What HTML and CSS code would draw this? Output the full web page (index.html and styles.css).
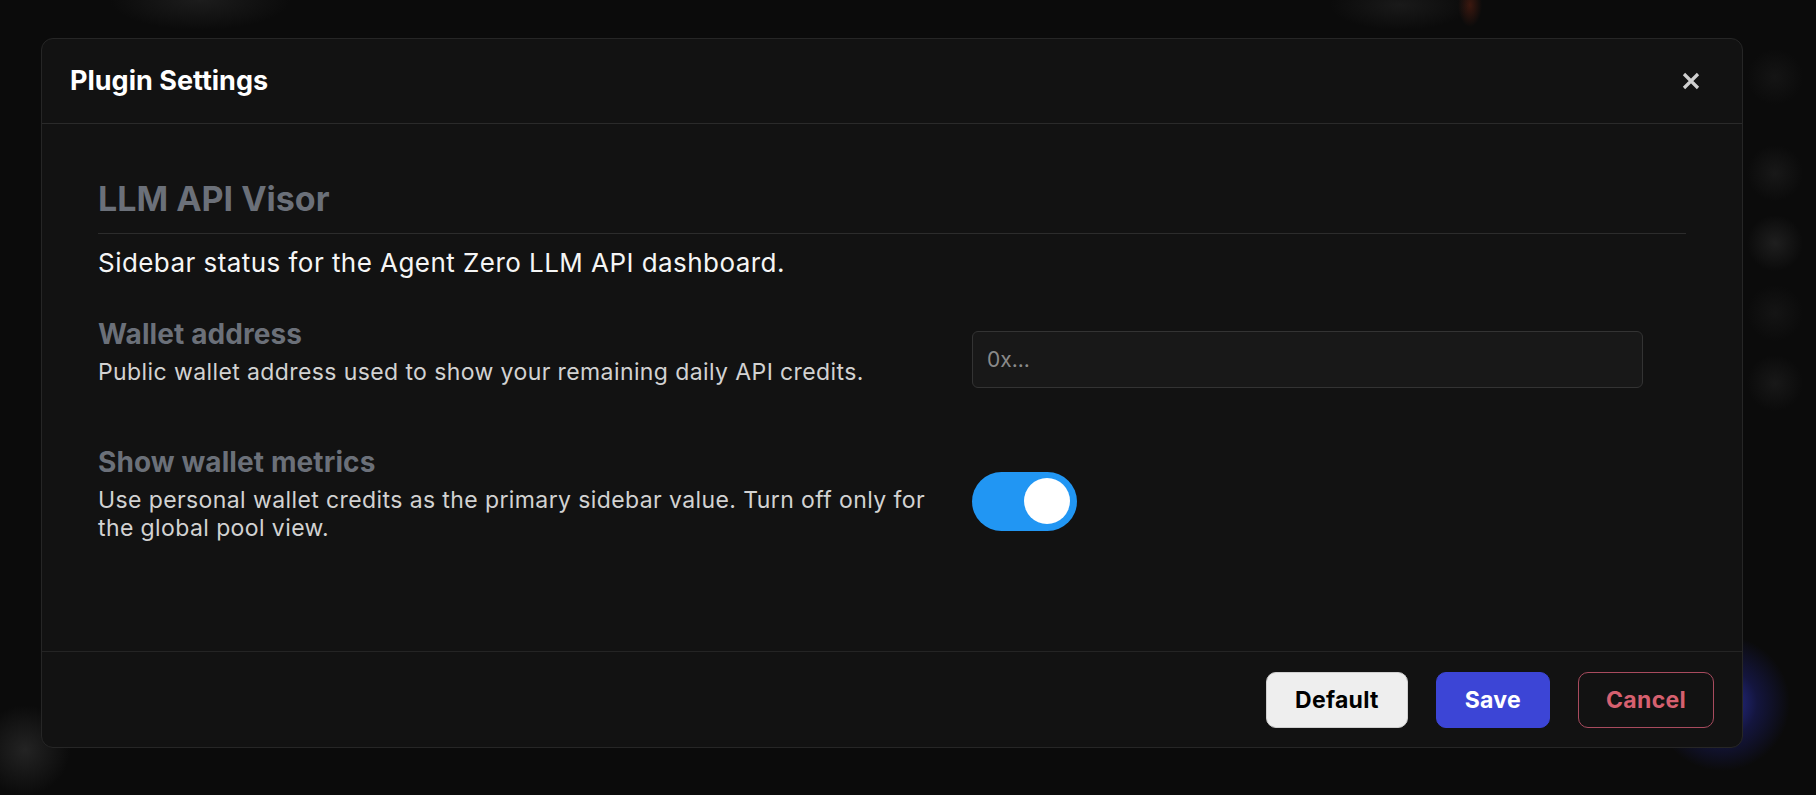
FILE: index.html
```
<!doctype html>
<html lang="en">
<head>
<meta charset="UTF-8">
<meta name="viewport" content="width=device-width, initial-scale=1">
<title>Plugin Settings</title>
<link rel="stylesheet" href="styles.css">
</head>
<body>
<div class="backdrop">
    <div class="modal">
        <div class="modal-header">
            <h1 class="modal-title">Plugin Settings</h1>
            <button class="close-btn" aria-label="Close">
                <svg width="18" height="18" viewBox="0 0 18 18">
                    <path d="M2 2 L16 16 M16 2 L2 16" stroke="#cfcfcf" stroke-width="3.2" fill="none"/>
                </svg>
            </button>
        </div>

        <div class="modal-body">
            <h2 class="section-title">LLM API Visor</h2>
            <p class="section-desc">Sidebar status for the Agent Zero LLM API dashboard.</p>

            <div class="field">
                <div class="field-text">
                    <div class="field-label">Wallet address</div>
                    <div class="field-desc">Public wallet address used to show your remaining daily API credits.</div>
                </div>
                <div class="field-control">
                    <input class="text-input" type="text" placeholder="0x...">
                </div>
            </div>

            <div class="field">
                <div class="field-text">
                    <div class="field-label">Show wallet metrics</div>
                    <div class="field-desc">Use personal wallet credits as the primary sidebar value. Turn off only for the global pool view.</div>
                </div>
                <div class="field-control">
                    <label class="toggle">
                        <input type="checkbox" checked>
                        <span class="slider"></span>
                    </label>
                </div>
            </div>
        </div>

        <div class="modal-footer">
            <button class="btn btn-default">Default</button>
            <button class="btn btn-save">Save</button>
            <button class="btn btn-cancel">Cancel</button>
        </div>
    </div>
</div>
</body>
</html>
```

FILE: styles.css
```
html, body {
    margin: 0;
    padding: 0;
    height: 100%;
}

body {
    background-color: #0b0b0b;
    background-image:
        radial-gradient(circle at 1722px 703px, rgba(60, 70, 240, 0.65) 0, rgba(40, 45, 180, 0.3) 35px, rgba(11, 11, 11, 0) 68px),
        radial-gradient(circle at 25px 750px, rgba(55, 55, 55, 0.55) 0, rgba(11, 11, 11, 0) 45px),
        radial-gradient(circle at 1775px 243px, rgba(50, 50, 50, 0.5) 0, rgba(11, 11, 11, 0) 28px),
        radial-gradient(circle at 1775px 173px, rgba(40, 40, 40, 0.45) 0, rgba(11, 11, 11, 0) 28px),
        radial-gradient(circle at 1775px 383px, rgba(40, 40, 40, 0.45) 0, rgba(11, 11, 11, 0) 28px),
        radial-gradient(circle at 1775px 313px, rgba(32, 32, 32, 0.45) 0, rgba(11, 11, 11, 0) 28px),
        radial-gradient(circle at 1775px 77px, rgba(32, 32, 32, 0.45) 0, rgba(11, 11, 11, 0) 28px),
        radial-gradient(ellipse 90px 30px at 200px 0px, rgba(40, 40, 40, 0.6) 0, rgba(11, 11, 11, 0) 100%),
        radial-gradient(ellipse 70px 25px at 1400px 5px, rgba(40, 40, 40, 0.5) 0, rgba(11, 11, 11, 0) 100%),
        radial-gradient(ellipse 12px 22px at 1470px 5px, rgba(120, 40, 20, 0.45) 0, rgba(11, 11, 11, 0) 100%);
    background-repeat: no-repeat;
    font-family: Inter, "Noto Sans", sans-serif;
    color: #f2f2f2;
    overflow: hidden;
}

.backdrop {
    padding: 38px 0 0 41px;
}

.modal {
    width: 1702px;
    height: 710px;
    box-sizing: border-box;
    background: #121212;
    border: 1px solid #262626;
    border-radius: 12px;
    display: flex;
    flex-direction: column;
}

/* header */
.modal-header {
    height: 85px;
    box-sizing: border-box;
    border-bottom: 1px solid #2a2a2a;
    padding: 0 28px;
    display: flex;
    align-items: center;
    justify-content: space-between;
}

.modal-title {
    margin: 0;
    font-size: 27px;
    line-height: 32px;
    font-weight: 700;
    color: #ffffff;
}

.close-btn {
    background: none;
    border: none;
    padding: 0;
    margin-right: 14px;
    width: 18px;
    height: 18px;
    display: flex;
    cursor: pointer;
}

/* body */
.modal-body {
    flex: 1;
    padding: 55px 56px 0 56px;
}

.section-title {
    margin: 0;
    font-size: 34px;
    line-height: 40px;
    font-weight: 700;
    color: #6b7079;
    padding-bottom: 14px;
    border-bottom: 1px solid #2c2c2c;
}

.section-desc {
    margin: 13px 0 38px 0;
    font-size: 26px;
    line-height: 32px;
    letter-spacing: 0.45px;
    color: #f5f5f5;
}

.field {
    display: grid;
    grid-template-columns: 874px 1fr;
    align-items: center;
    margin-bottom: 43px;
}

.field-text {
    padding-right: 30px;
    padding-bottom: 16px;
}

.field-label {
    font-size: 28px;
    line-height: 34px;
    font-weight: 700;
    letter-spacing: 0.1px;
    color: #6b7079;
    margin-bottom: 7px;
}

.field-desc {
    font-size: 23px;
    line-height: 28px;
    letter-spacing: 0.4px;
    color: #d2d2d2;
}

.text-input {
    width: 671px;
    height: 57px;
    box-sizing: border-box;
    background: #181818;
    border: 1px solid #333333;
    border-radius: 6px;
    padding: 0 14px;
    font-family: Inter, "Noto Sans", sans-serif;
    font-size: 21px;
    color: #eeeeee;
    outline: none;
}

.text-input::placeholder {
    color: #8a8a8a;
}

/* toggle switch */
.toggle {
    display: block;
    position: relative;
    width: 105px;
    height: 59px;
}

.toggle input {
    display: none;
}

.slider {
    display: block;
    width: 100%;
    height: 100%;
    border-radius: 30px;
    background: #444;
}

.toggle input:checked + .slider {
    background: #2196f3;
}

.slider::before {
    content: "";
    position: absolute;
    top: 6px;
    left: 7px;
    width: 46px;
    height: 46px;
    border-radius: 50%;
    background: #ffffff;
}

.toggle input:checked + .slider::before {
    left: 52px;
}

/* footer */
.modal-footer {
    border-top: 1px solid #242424;
    padding: 20px 28px 19px 28px;
    display: flex;
    justify-content: flex-end;
    gap: 28px;
}

.btn {
    height: 56px;
    padding: 0 28px;
    border-radius: 10px;
    font-family: Inter, "Noto Sans", sans-serif;
    font-size: 23px;
    font-weight: 700;
    letter-spacing: 0.3px;
    cursor: pointer;
}

.btn-default {
    background: #eeeeee;
    border: 1px solid #cfcfcf;
    color: #000000;
}

.btn-save {
    background: #3c45d6;
    border: 1px solid #3c45d6;
    color: #ffffff;
}

.btn-cancel {
    padding: 0 27px;
    background: transparent;
    border: 1px solid #a84b5e;
    color: #d6606f;
}
```
